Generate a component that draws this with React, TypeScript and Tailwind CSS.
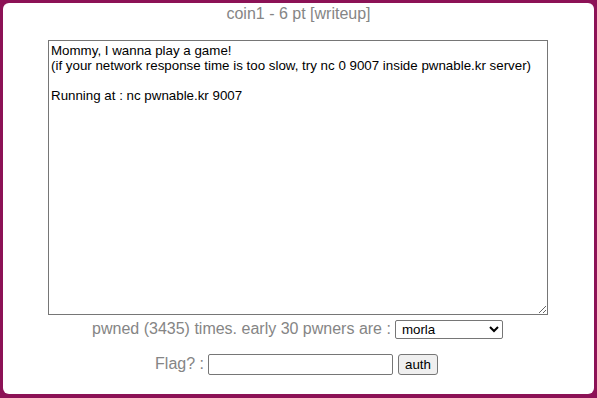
export default function App() {
  return (
    <div className="h-[398px] w-[597px] bg-[#8c1256] px-[3px] pt-[3px] pb-[4px] font-['Liberation_Sans',Arial,sans-serif]">
      <div className="flex h-full w-full flex-col items-center rounded-[6px] bg-white">
        <p className="mt-[2px] text-[16px] leading-[18px] text-[#858585]">
          coin1 - 6 pt [writeup]
        </p>
        <textarea
          readOnly
          className="mt-[17px] mr-[1px] h-[275px] w-[500px] resize border border-[#767676] p-[2px] text-[13.333px] leading-[15px] text-black outline-none"
          defaultValue={
            "Mommy, I wanna play a game!\n(if your network response time is too slow, try nc 0 9007 inside pwnable.kr server)\n\nRunning at : nc pwnable.kr 9007"
          }
        />
        <div className="mt-[2px] mr-[2px] flex items-center gap-[4px] text-[16px] text-[#858585]">
          <span>pwned (3435) times. early 30 pwners are :</span>
          <select className="h-[19px] w-[108px] rounded-[2px] border border-[#767676] bg-white pl-[2px] text-[13.333px] text-black">
            <option>morla</option>
          </select>
        </div>
        <div className="mt-[11px] mr-[4px] flex items-center gap-[4px] text-[16px] text-[#858585]">
          <span>Flag? :</span>
          <input
            type="text"
            className="h-[21px] w-[185px] rounded-[2px] border border-[#767676] bg-white px-[2px] text-[13.333px] text-black"
          />
          <button className="ml-[1px] h-[21px] rounded-[3px] border border-[#767676] bg-[#efefef] px-[6px] text-[13.333px] text-black">
            auth
          </button>
        </div>
      </div>
    </div>
  );
}
